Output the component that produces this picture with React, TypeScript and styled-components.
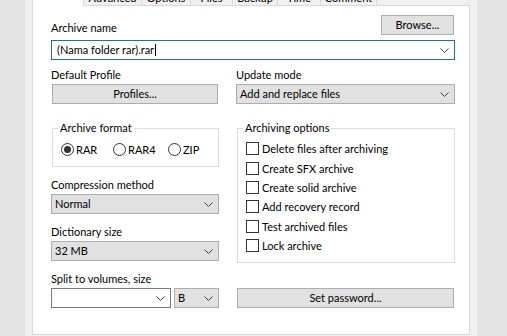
import React from "react";
import styled, { createGlobalStyle } from "styled-components";

const Global = createGlobalStyle`
  html, body { margin: 0; padding: 0; }
  body {
    background: #e4e4e4;
    font-family: Lato, "Noto Sans", "Liberation Sans", sans-serif;
    font-size: 11px;
    color: #000;
  }
`;

const Page = styled.div`
  width: 507px;
  height: 336px;
  overflow: hidden;
  padding-left: 25px;
  box-sizing: border-box;
  display: flex;
  background: #e4e4e4;
`;

const Dialog = styled.div`
  width: 452px;
  height: 336px;
  box-sizing: border-box;
  padding: 0 7px;
  background: #f0f0f0;
  display: flex;
  flex-direction: column;
`;

const TabStrip = styled.div`
  display: flex;
  height: 6px;
  margin-bottom: -1px;
  position: relative;
  z-index: 1;
  align-items: flex-start;
`;

const Tab = styled.div<{ $w: number; $active?: boolean }>`
  width: ${(p) => p.$w}px;
  height: ${(p) => (p.$active ? 6 : 5)}px;
  box-sizing: border-box;
  overflow: hidden;
  display: flex;
  align-items: flex-end;
  justify-content: center;
  line-height: 14px;
  background: ${(p) => (p.$active ? "#fff" : "#f0f0f0")};
  border-right: 1px solid #d9d9d9;
  border-left: ${(p) => (p.$active ? "1px solid #d9d9d9" : "none")};
  white-space: nowrap;
`;

const Panel = styled.div`
  background: #fff;
  border: 1px solid #d9d9d9;
  padding: 9px 14px 26px 18px;
  display: flex;
  flex-direction: column;
`;

const TopRow = styled.div`
  display: flex;
  justify-content: space-between;
  align-items: flex-end;
`;

const Label = styled.div`
  line-height: 14px;
  height: 14px;
  white-space: nowrap;
`;

const FieldLabel = styled(Label)<{ $mt?: number }>`
  margin-top: ${(p) => p.$mt ?? 0}px;
  margin-bottom: 2px;
`;

const Button = styled.button<{ $w?: number; $inset?: boolean }>`
  height: 20px;
  ${(p) => (p.$w ? `width: ${p.$w}px;` : "")}
  margin: 0 ${(p) => (p.$inset ? 1 : 0)}px;
  box-sizing: border-box;
  background: #e1e1e1;
  border: 1px solid #adadad;
  font-family: inherit;
  font-size: 11px;
  line-height: 14px;
  color: #000;
  padding: 0;
  display: flex;
  align-items: center;
  justify-content: center;
`;

const BrowseButton = styled(Button)`
  margin-right: 1px;
`;

const Select = styled.div<{ $w?: number; $white?: boolean; $focus?: boolean; $pl?: number }>`
  height: 20px;
  ${(p) => (p.$w ? `width: ${p.$w}px;` : "")}
  box-sizing: border-box;
  background: ${(p) => (p.$white ? "#fff" : "#e1e1e1")};
  border: 1px solid
    ${(p) => (p.$focus ? "#1f7398" : p.$white ? "#7a7a7a" : "#adadad")};
  display: flex;
  align-items: center;
  padding: 0 5px 0 ${(p) => p.$pl ?? 3}px;
  line-height: 14px;
  white-space: nowrap;
`;

const SelectText = styled.span`
  flex: 1;
  display: flex;
  align-items: center;
`;

const Caret = styled.span`
  display: inline-block;
  width: 1px;
  height: 12px;
  background: #000;
  margin-left: 1px;
`;

const Chevron = () => (
  <svg width="9" height="5" viewBox="0 0 9 5" style={{ display: "block" }}>
    <polyline points="0.5,0.5 4.5,4.5 8.5,0.5" fill="none" stroke="#3c3c3c" strokeWidth="1" />
  </svg>
);

const Combo = styled(Select)`
  margin-top: 5px;
`;

const Columns = styled.div`
  display: grid;
  grid-template-columns: 168px 219px;
  column-gap: 17px;
  margin-top: 8px;
`;

const Column = styled.div`
  display: flex;
  flex-direction: column;
`;

const Group = styled.fieldset<{ $pad: string }>`
  margin: 17px 0 0 1px;
  padding: ${(p) => p.$pad};
  border: 1px solid #dcdcdc;
  min-width: 0;
`;

const Legend = styled.legend`
  padding: 0 2px;
  margin-left: -3px;
  line-height: 14px;
  white-space: nowrap;
`;

const RadioRow = styled.div`
  display: flex;
  height: 15px;
  align-items: center;
`;

const RadioItem = styled.label<{ $w?: number }>`
  display: flex;
  align-items: center;
  ${(p) => (p.$w ? `width: ${p.$w}px;` : "")}
  gap: 2px;
`;

const RadioCircle = styled.span<{ $on?: boolean }>`
  width: 13px;
  height: 13px;
  box-sizing: border-box;
  border: 1px solid #333;
  border-radius: 50%;
  background: #fff;
  display: flex;
  align-items: center;
  justify-content: center;
  &::after {
    content: "";
    width: 7px;
    height: 7px;
    border-radius: 50%;
    background: ${(p) => (p.$on ? "#333" : "transparent")};
  }
`;

const CheckRow = styled.label`
  display: flex;
  align-items: center;
  height: 19.4px;
  gap: 3px;
  white-space: nowrap;
`;

const CheckBox = styled.span`
  width: 13px;
  height: 13px;
  box-sizing: border-box;
  border: 1px solid #333;
  background: #fff;
  flex: none;
`;

const SplitRow = styled.div`
  display: flex;
  gap: 3px;
`;

const PasswordButton = styled(Button)`
  margin-top: auto;
`;

const tabs: [string, number][] = [
  ["General", 52],
  ["Advanced", 58],
  ["Options", 49],
  ["Files", 42],
  ["Backup", 45],
  ["Time", 43],
  ["Comment", 56],
];

const options = [
  "Delete files after archiving",
  "Create SFX archive",
  "Create solid archive",
  "Add recovery record",
  "Test archived files",
  "Lock archive",
];

export default function App() {
  return (
    <>
      <Global />
      <Page>
        <Dialog>
          <TabStrip>
            {tabs.map(([t, w], i) => (
              <Tab key={t} $w={w} $active={i === 0}>
                {i === 0 ? "" : t}
              </Tab>
            ))}
          </TabStrip>
          <Panel>
            <TopRow>
              <Label>Archive name</Label>
              <BrowseButton $w={73}>Browse...</BrowseButton>
            </TopRow>
            <Combo $white $focus $pl={5}>
              <SelectText>
                (Nama folder rar).rar
                <Caret />
              </SelectText>
              <Chevron />
            </Combo>
            <Columns>
              <Column>
                <FieldLabel>Default Profile</FieldLabel>
                <Button $inset>Profiles...</Button>
                <Group $pad="7px 8px 9px 8px">
                  <Legend>Archive format</Legend>
                  <RadioRow>
                    <RadioItem $w={52}>
                      <RadioCircle $on />
                      RAR
                    </RadioItem>
                    <RadioItem $w={55}>
                      <RadioCircle />
                      RAR4
                    </RadioItem>
                    <RadioItem>
                      <RadioCircle />
                      ZIP
                    </RadioItem>
                  </RadioRow>
                </Group>
                <FieldLabel $mt={11}>Compression method</FieldLabel>
                <Select>
                  <SelectText>Normal</SelectText>
                  <Chevron />
                </Select>
                <FieldLabel $mt={11}>Dictionary size</FieldLabel>
                <Select>
                  <SelectText>32 MB</SelectText>
                  <Chevron />
                </Select>
                <FieldLabel $mt={11}>Split to volumes, size</FieldLabel>
                <SplitRow>
                  <Select $w={120} $white>
                    <SelectText />
                    <Chevron />
                  </Select>
                  <Select $w={45}>
                    <SelectText>B</SelectText>
                    <Chevron />
                  </Select>
                </SplitRow>
              </Column>
              <Column>
                <FieldLabel>Update mode</FieldLabel>
                <Select>
                  <SelectText>Add and replace files</SelectText>
                  <Chevron />
                </Select>
                <Group $pad="4px 8px 6.5px 8px">
                  <Legend>Archiving options</Legend>
                  {options.map((o) => (
                    <CheckRow key={o}>
                      <CheckBox />
                      {o}
                    </CheckRow>
                  ))}
                </Group>
                <PasswordButton $inset>Set password...</PasswordButton>
              </Column>
            </Columns>
          </Panel>
        </Dialog>
      </Page>
    </>
  );
}
